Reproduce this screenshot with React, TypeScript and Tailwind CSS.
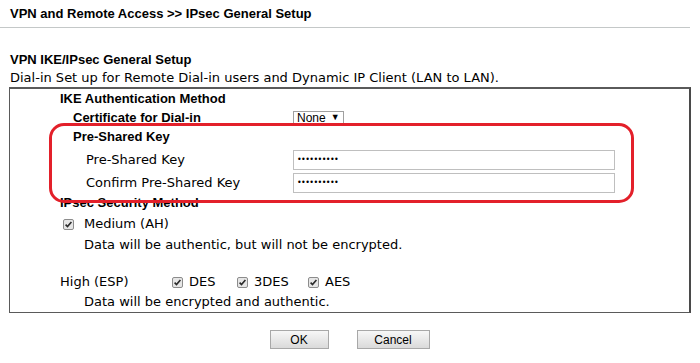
import React from 'react';

const sans = "font-['Liberation_Sans',Arial,sans-serif]";
const tah = "font-['DejaVu_Sans',Tahoma,sans-serif]";

const Check: React.FC = () => (
  <svg width="11" height="11" viewBox="0 0 11 11" className="shrink-0">
    <rect x="0.5" y="0.5" width="10" height="10" rx="1.5" fill="#e6e6e6" stroke="#8c8c8c" />
    <path d="M2.6 5.6 L4.5 7.6 L8.4 3" fill="none" stroke="#2b2b2b" strokeWidth="1.6" />
  </svg>
);

const Dots: React.FC = () => (
  <div className="h-[20px] w-[322px] border border-[#bfbfbf] bg-white flex items-center pl-[3px] text-[8px] tracking-[-0.6px] text-black leading-none">
    ••••••••••
  </div>
);

export default function App() {
  return (
    <div className={`relative w-[700px] h-[363px] bg-white text-black overflow-hidden ${sans}`}>
      <div className="h-[27px] pl-[10px] flex items-center text-[13px] font-bold">
        VPN and Remote Access &gt;&gt; IPsec General Setup
      </div>
      <div className="w-[690px] border-t border-[#c4c8c8]" />

      <div className="h-[24px]" />
      <div className="h-[16px] pl-[10px] flex items-center text-[13px] font-bold">VPN IKE/IPsec General Setup</div>
      <div className={`h-[19px] pl-[10px] flex items-center text-[13px] ${tah}`}>
        Dial-in Set up for Remote Dial-in users and Dynamic IP Client (LAN to LAN).
      </div>

      <div className="ml-[9px] w-[682px] border-t-2 border-t-[#5a5a5a] border-l border-l-[#5a5a5a] border-r-2 border-r-[#4a4a4a] border-b border-b-[#5a5a5a]">
        <div className="h-[20px] pl-[50px] flex items-center text-[13px] font-bold">IKE Authentication Method</div>
        <div className="h-[17px] flex items-center text-[13px] font-bold">
          <div className="w-[283px] pl-[63px]">Certificate for Dial-in</div>
          <div className="h-[14px] w-[51px] border border-[#a0a0a0] flex items-center pl-[3px] text-[12px] font-normal leading-none">
            None <span className="ml-[5px] text-[9px]">▼</span>
          </div>
        </div>
        <div className="h-[22px] pl-[63px] flex items-center text-[13px] font-bold">Pre-Shared Key</div>
        <div className={`h-[23px] flex items-center text-[13px] ${tah}`}>
          <div className="w-[283px] pl-[76px]">Pre-Shared Key</div>
          <Dots />
        </div>
        <div className={`h-[23px] flex items-center text-[13px] ${tah}`}>
          <div className="w-[283px] pl-[76px]">Confirm Pre-Shared Key</div>
          <Dots />
        </div>
        <div className="h-[18px] pl-[50px] flex items-center text-[13px] font-bold">IPsec Security Method</div>
        <div className={`h-[24px] pl-[53px] flex items-center gap-[10px] text-[13px] ${tah}`}>
          <Check />
          <span>Medium (AH)</span>
        </div>
        <div className={`h-[17px] pl-[74px] flex items-center text-[13px] ${tah}`}>
          Data will be authentic, but will not be encrypted.
        </div>
        <div className="h-[19px]" />
        <div className={`h-[20px] pl-[50px] flex items-center text-[13px] ${tah}`}>
          <span className="w-[112px]">High (ESP)</span>
          <span className="flex items-center gap-[6px] w-[65px]"><Check />DES</span>
          <span className="flex items-center gap-[6px] w-[71px]"><Check />3DES</span>
          <span className="flex items-center gap-[6px]"><Check />AES</span>
        </div>
        <div className={`h-[20px] pl-[74px] flex items-center text-[13px] ${tah}`}>
          Data will be encrypted and authentic.
        </div>
      </div>

      <div className="mt-[17px] flex justify-center gap-[28px] pr-[1px]">
        <button className="w-[59px] h-[19px] border border-[#a8a8a8] bg-gradient-to-b from-[#f7f7f7] to-[#dadada] text-[12px] leading-none text-black">
          OK
        </button>
        <button className="w-[73px] h-[19px] border border-[#a8a8a8] bg-gradient-to-b from-[#f7f7f7] to-[#dadada] text-[12px] leading-none text-black">
          Cancel
        </button>
      </div>

      <div className="absolute left-[49px] top-[123px] w-[585px] h-[80px] border-[3px] border-[#e3202a] rounded-[15px]" />
    </div>
  );
}
